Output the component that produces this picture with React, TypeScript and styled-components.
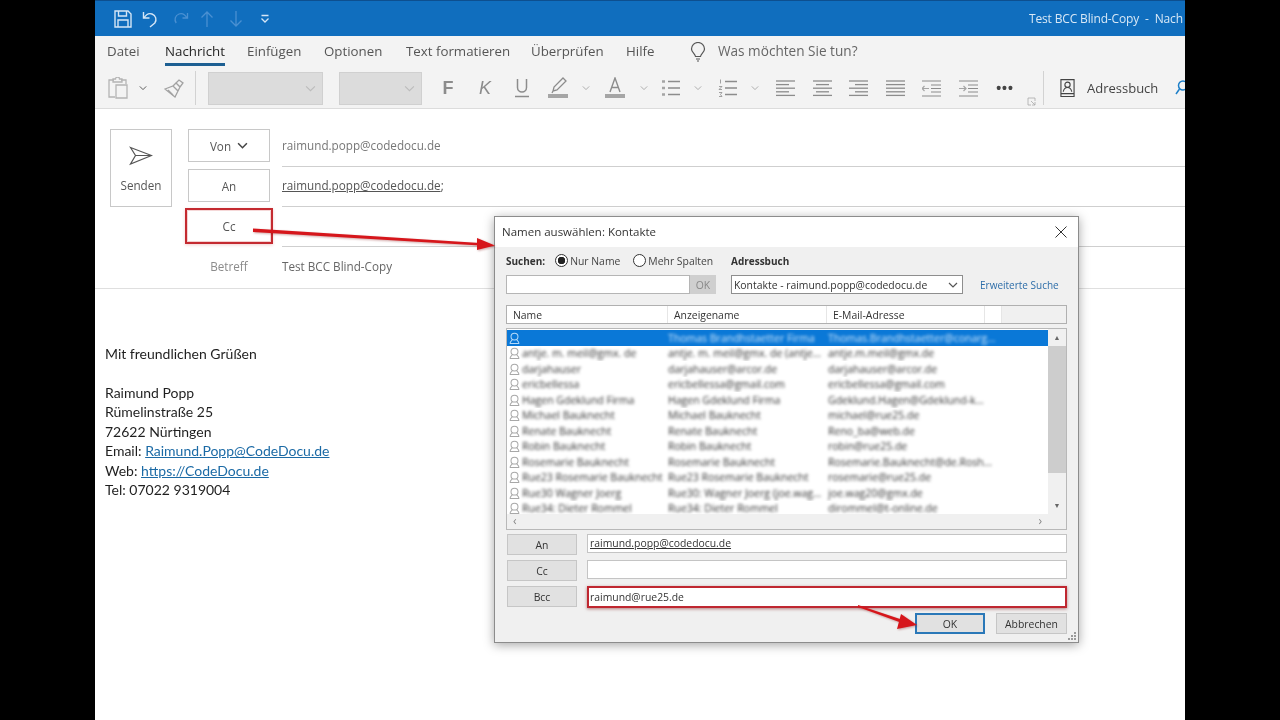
import React from 'react';
import styled, { createGlobalStyle } from 'styled-components';

const uiFont = `"Open Sans", "Noto Sans", sans-serif`;
const Grey = '#8c8c8c';

const GlobalStyle = createGlobalStyle`
  html, body {
    margin: 0;
    height: 100%;
    background: #000;
    overflow: hidden;
  }
  * {
    box-sizing: border-box;
  }
`;

const people = [
  ['Thomas Brandhstaetter Firma', 'Thomas.Brandhstaetter@conarg...'],
  ['antje. m. meil@gmx. de', 'antje. m. meil@gmx. de (antje...', 'antje.m.meil@gmx.de'],
  ['darjahauser', 'darjahauser@arcor.de', 'darjahauser@arcor.de'],
  ['ericbellessa', 'ericbellessa@gmail.com', 'ericbellessa@gmail.com'],
  ['Hagen Gdeklund Firma', 'Hagen Gdeklund Firma', 'Gdeklund.Hagen@Gdeklund-k...'],
  ['Michael Bauknecht', 'Michael Bauknecht', 'michael@rue25.de'],
  ['Renate Bauknecht', 'Renate Bauknecht', 'Reno_ba@web.de'],
  ['Robin Bauknecht', 'Robin Bauknecht', 'robin@rue25.de'],
  ['Rosemarie Bauknecht', 'Rosemarie Bauknecht', 'Rosemarie.Bauknecht@de.Rosh...'],
  ['Rue23 Rosemarie Bauknecht', 'Rue23 Rosemarie Bauknecht', 'rosemarie@rue25.de'],
  ['Rue30 Wagner Joerg', 'Rue30: Wagner Joerg (joe.wag...', 'joe.wag20@gmx.de'],
  ['Rue34: Dieter Rommel', 'Rue34: Dieter Rommel', 'dirommel@t-online.de'],
];

const tabs = [
  { label: 'Datei', width: 58 },
  { label: 'Nachricht', width: 82, active: true },
  { label: 'Einfügen', width: 77 },
  { label: 'Optionen', width: 82 },
  { label: 'Text formatieren', width: 125 },
  { label: 'Überprüfen', width: 95 },
  { label: 'Hilfe', width: 64 },
];

const SaveIcon = () => (
  <svg width="18" height="18" viewBox="0 0 18 18" fill="none" stroke="#d5e6f6" strokeWidth="1.4">
    <path d="M1 1h13l3 3v13H1z" />
    <path d="M4.5 1v5h8V1M4 17v-7h10v7" />
  </svg>
);

const UndoIcon = () => (
  <svg width="18" height="18" viewBox="0 0 18 18" fill="none" stroke="#d5e6f6" strokeWidth="1.4">
    <path d="M1.5 2v6h6M2 8c2-3.5 5-5 8-4 4 1.4 5 6 2.8 9L8 17" />
  </svg>
);

const RedoIcon = () => (
  <svg width="18" height="18" viewBox="0 0 18 18" fill="none" stroke="#4a90d2" strokeWidth="1.3">
    <path d="M16.5 3v5h-5M16 8c-2-3.5-5-5-8-4C4 5.4 3 10 5.2 13" />
  </svg>
);

const VerticalArrow = ({ down }: { down?: boolean }) => (
  <svg width="16" height="18" viewBox="0 0 16 18" fill="none" stroke="#4a90d2" strokeWidth="1.3">
    {down ? <path d="M8 1v15M2.5 10.5 8 16l5.5-5.5" /> : <path d="M8 17V2M2.5 7.5 8 2l5.5 5.5" />}
  </svg>
);

const QuickAccessMenu = () => (
  <svg width="10" height="10" viewBox="0 0 10 10" fill="none" stroke="#d5e6f6" strokeWidth="1.3">
    <path d="M1.5 1.5h7M1.5 4.5 5 8l3.5-3.5" />
  </svg>
);

const BulbIcon = () => (
  <svg width="16" height="20" viewBox="0 0 16 20" fill="none" stroke="#555" strokeWidth="1.2">
    <path d="M5.5 14.5C5 11.5 1.5 10.5 1.5 7a6.5 6.5 0 0 1 13 0c0 3.5-3.5 4.5-4 7.5zM6 17h4M7 19h2" />
  </svg>
);

const Chevron = ({ color = '#777', size = 8, weight = 1.2 }: { color?: string; size?: number; weight?: number }) => (
  <svg width={size} height={size} viewBox="0 0 10 10" fill="none" stroke={color} strokeWidth={weight}>
    <path d="M1 3l4 4 4-4" />
  </svg>
);

const PasteIcon = () => (
  <svg width="20" height="22" viewBox="0 0 20 22" fill="none" stroke="#b4b4b4" strokeWidth="1.3">
    <path d="M6 3H1v17h6M13 3h5v4M5 5V2h2.5a2 2 0 0 1 4 0H14v3z" />
    <path d="M8 8h11v13H8z" fill="#f3f3f3" />
  </svg>
);

const BrushIcon = () => (
  <svg width="20" height="19" viewBox="0 0 20 19" fill="none" stroke="#a2a2a2" strokeWidth="1.3">
    <path d="M1 10l8-3 5 5-3 6zM9 7l3-3 4 4-2 4M12 4l3-3 4 3-3 4" />
    <path d="M4 11l5 5" />
  </svg>
);

const UnderlinedLetter = () => (
  <svg width="16" height="20" viewBox="0 0 16 20" fill="none" stroke={Grey} strokeWidth="1.5">
    <path d="M3.5 1v8.5a4.5 4.5 0 0 0 9 0V1M1 18.5h14" />
  </svg>
);

const HighlightIcon = () => (
  <svg width="22" height="22" viewBox="0 0 22 22" fill="none" stroke={Grey} strokeWidth="1.3">
    <path d="M16 1l3 3L10 13l-4 1 1-4zM6 14l-1 2" />
    <rect x="1" y="17" width="20" height="4" fill="#a5a5a5" stroke="none" />
  </svg>
);

const FontColorIcon = () => (
  <svg width="22" height="22" viewBox="0 0 22 22" fill="none" stroke={Grey} strokeWidth="1.4">
    <path d="M6 15 11 1l5 14M7.5 10.5h7" />
    <rect x="1" y="17" width="20" height="4" fill="#a5a5a5" stroke="none" />
  </svg>
);

const BulletsIcon = () => (
  <svg width="20" height="18" viewBox="0 0 20 18" fill="none" stroke={Grey} strokeWidth="1.3">
    <path d="M7 2.5h12M7 9h12M7 15.5h12" />
    <path d="M1 2.5h3M1 9h3M1 15.5h3" strokeWidth="2.4" stroke="#a5a5a5" />
  </svg>
);

const NumberedIcon = () => (
  <svg width="20" height="18" viewBox="0 0 20 18" fill="none" stroke={Grey} strokeWidth="1.3">
    <path d="M7 2.5h12M7 9h12M7 15.5h12" />
    <path d="M2.5 0.5v4M1 7.5h3l-3 3h3M1 13.5h3l-1.5 2 1.5 2H1" strokeWidth="0.8" />
  </svg>
);

const alignRows: Record<string, number[][]> = {
  left: [[0, 19], [0, 13], [0, 19], [0, 13], [0, 19]],
  center: [[0, 19], [3, 16], [0, 19], [3, 16], [0, 19]],
  right: [[0, 19], [6, 19], [0, 19], [6, 19], [0, 19]],
  full: [[0, 19], [0, 19], [0, 19], [0, 19], [0, 19]],
};

const AlignIcon = ({ kind }: { kind: string }) => (
  <svg width="19" height="17" viewBox="0 0 19 17" stroke={Grey} strokeWidth="1.3">
    {alignRows[kind].map(([from, to], i) => (
      <line key={i} x1={from} x2={to} y1={1 + i * 3.6} y2={1 + i * 3.6} />
    ))}
  </svg>
);

const IndentIcon = ({ more }: { more?: boolean }) => (
  <svg width="19" height="17" viewBox="0 0 19 17" fill="none" stroke={Grey} strokeWidth="1.2">
    <path d="M0 1h19M9 5h10M9 8.5h10M9 12h10M0 16h19" />
    {more ? (
      <path d="M0 8.5h7M4.5 6 7 8.5 4.5 11" stroke="#a5a5a5" />
    ) : (
      <path d="M7 8.5H0M2.5 6 0 8.5 2.5 11" stroke="#a5a5a5" />
    )}
  </svg>
);

const LauncherIcon = () => (
  <svg width="9" height="9" viewBox="0 0 9 9" fill="none" stroke="#a8a8a8" strokeWidth="0.8">
    <path d="M8 4V1H1v7h3M4 4l4 4M8 5v3H5" />
  </svg>
);

const BookIcon = () => (
  <svg width="15" height="20" viewBox="0 0 16 20" fill="none" stroke="#444" strokeWidth="1.2">
    <path d="M1 1h14v18H1zM1 16h14" />
    <circle cx="8" cy="6.5" r="2.8" />
    <path d="M3.5 14c.5-3 2.5-4.5 4.5-4.5s4 1.5 4.5 4.5" />
  </svg>
);

const PersonSearchIcon = () => (
  <svg width="14" height="17" viewBox="0 0 14 17" fill="none" stroke="#1d7fc8" strokeWidth="1.5">
    <circle cx="8" cy="5.5" r="4.5" />
    <path d="M4.5 9 1 14" />
  </svg>
);

const SendIcon = () => (
  <svg width="24" height="20" viewBox="0 0 24 20" fill="none" stroke="#555" strokeWidth="1.2">
    <path d="M1.5 1.5 22.5 9.5 1.5 18 6.5 9.5zM6.5 9.5h16" />
  </svg>
);

const CloseIcon = () => (
  <svg width="12" height="12" viewBox="0 0 12 12" stroke="#333" strokeWidth="1">
    <path d="M.5.5l11 11M11.5.5l-11 11" />
  </svg>
);

const RowPerson = ({ light }: { light?: boolean }) => (
  <svg width="11" height="12" viewBox="0 0 12 13" fill="none" stroke={light ? '#d5ecff' : '#999'} strokeWidth="1.1">
    <circle cx="6" cy="5" r="3.8" />
    <path d="M1 12.5c.5-2.5 2-3.5 2.5-4M11 12.5c-.5-2.5-2-3.5-2.5-4M1 12.5h10" />
  </svg>
);

const Screen = styled.div`
  width: 1280px;
  height: 720px;
  padding-left: 95px;
  background: #000;
`;

const OutlookWindow = styled.div`
  position: relative;
  width: 1090px;
  height: 720px;
  background: #fff;
  overflow: hidden;
  font-family: ${uiFont};
  color: #444;
  filter: blur(0.35px);
`;

const TitleBar = styled.header`
  height: 36px;
  background: #106ebe;
  border-top: 1px solid #0d4f8f;
  display: flex;
  align-items: center;
  justify-content: space-between;
`;

const QuickAccess = styled.div`
  display: flex;
  align-items: center;
  padding-left: 14px;
`;

const WindowTitle = styled.div`
  width: 156px;
  white-space: pre;
  font-size: 12px;
  letter-spacing: -0.15px;
  color: #d8e8f6;
`;

const TabBar = styled.nav`
  height: 32px;
  background: #f3f3f3;
  display: flex;
  align-items: center;
  padding-left: 12px;
`;

const Tab = styled.div<{ $width: number }>`
  width: ${(p) => p.$width}px;
  flex: none;
`;

const TabLabel = styled.span<{ $active?: boolean }>`
  display: inline-block;
  font-size: 13.3px;
  line-height: 26px;
  height: 28px;
  color: ${(p) => (p.$active ? '#262626' : '#555')};
  font-weight: ${(p) => (p.$active ? 500 : 400)};
  border-bottom: ${(p) => (p.$active ? '3px solid #1d5f92' : '3px solid transparent')};
`;

const BulbSlot = styled.div`
  width: 28px;
  display: flex;
`;

const TellMe = styled.span`
  font-size: 13.6px;
  line-height: 26px;
  margin-bottom: 2px;
  color: #666;
`;

const Ribbon = styled.div`
  height: 41px;
  background: #f3f3f3;
  border-bottom: 1px solid #dcdcdc;
  display: flex;
  align-items: center;
  padding-left: 8px;
`;

const ToolSlot = styled.div<{ $w: number }>`
  width: ${(p) => p.$w}px;
  flex: none;
  display: flex;
  align-items: center;
  justify-content: center;
`;

const RibbonDivider = styled.div`
  width: 1px;
  height: 34px;
  background: #d2d2d2;
  flex: none;
`;

const FontSelect = styled.div<{ $width: number; $left: number }>`
  width: ${(p) => p.$width}px;
  margin-left: ${(p) => p.$left}px;
  height: 33px;
  background: #dcdcdc;
  border: 1px solid #d0d0d0;
  display: flex;
  align-items: center;
  justify-content: flex-end;
  padding-right: 6px;
  flex: none;
`;

const ToolGap = styled.div`
  width: 8px;
  flex: none;
`;

const GlyphF = styled.span`
  font: 700 18px "Liberation Sans", sans-serif;
  color: ${Grey};
`;

const GlyphK = styled.span`
  font: italic 400 18px "Liberation Sans", sans-serif;
  color: ${Grey};
`;

const Dots = styled.span`
  font: 700 14px "Liberation Sans", sans-serif;
  letter-spacing: 1px;
  color: #444;
`;

const LauncherSlot = styled.div`
  width: 17px;
  flex: none;
  align-self: flex-end;
  padding-bottom: 2px;
  padding-left: 1px;
  display: flex;
`;

const AddressBook = styled.div`
  display: flex;
  align-items: center;
  gap: 12px;
  margin-left: 16px;
  font-size: 13px;
  color: #444;
  white-space: nowrap;
  flex: none;
`;

const PersonSearchSlot = styled.div`
  margin-left: 17px;
  display: flex;
  flex: none;
`;

const Compose = styled.section`
  display: flex;
  padding-top: 20px;
`;

const SendColumn = styled.div`
  width: 93px;
  flex: none;
  padding-left: 15px;
`;

const SendButton = styled.div`
  width: 62px;
  height: 78px;
  border: 1px solid #c8c8c8;
  display: flex;
  flex-direction: column;
  align-items: center;
  gap: 11px;
  padding-top: 16px;
  font-size: 11.7px;
  color: #555;
`;

const Fields = styled.div`
  flex: 1;
`;

const FieldRow = styled.div`
  display: grid;
  grid-template-columns: 82px 1fr;
  column-gap: 12px;
  height: 40px;
  align-items: start;
`;

const FieldButton = styled.div<{ $marked?: boolean }>`
  height: 33px;
  border: ${(p) => (p.$marked ? 'none' : '1px solid #c8c8c8')};
  display: flex;
  align-items: center;
  justify-content: center;
  font-size: 11.7px;
  color: #555;
  ${(p) =>
    p.$marked &&
    `
    height: 30px;
    margin-top: 2px;
    outline: 2px solid #c42a30;
    outline-offset: 1px;
    box-shadow: 0 1px 3px 3px rgba(200, 40, 40, 0.22);
  `}

  & svg {
    margin-left: 3px;
  }
`;

const FieldValue = styled.div<{ $dark?: boolean }>`
  height: 38px;
  border-bottom: 1px solid #cfcfcf;
  font-size: 11.7px;
  line-height: 33px;
  color: ${(p) => (p.$dark ? '#555' : '#777')};
`;

const SubjectRow = styled.div`
  display: grid;
  grid-template-columns: 82px 1fr;
  column-gap: 12px;
  height: 39px;
  align-items: start;
  line-height: 35px;
`;

const SubjectLabel = styled.span`
  font-size: 11.7px;
  color: #8b8b8b;
  text-align: center;
`;

const SubjectValue = styled.span`
  font-size: 11.7px;
  color: #666;
`;

const Signature = styled.div`
  border-top: 1px solid #dfdfdf;
  padding: 55px 0 0 10px;
  font-family: Lato, "Liberation Sans", sans-serif;
  font-size: 14px;
  color: #1f1f1f;

  & p {
    margin: 0;
    line-height: 19.45px;
  }
`;

const SigLink = styled.span`
  color: #1b6aa5;
  text-decoration: underline;
`;

const Dialog = styled.div`
  position: absolute;
  left: 399px;
  top: 216px;
  width: 585px;
  height: 427px;
  background: #f0f0f0;
  border: 1px solid #8c8c8c;
  box-shadow: 0 2px 10px rgba(0, 0, 0, 0.35);
  display: flex;
  flex-direction: column;
  font-size: 10.4px;
  color: #333;
`;

const DialogHeader = styled.div`
  height: 30px;
  flex: none;
  background: #fff;
  display: flex;
  align-items: center;
  justify-content: space-between;
  padding: 0 11px 1px 7px;
  font-size: 11.5px;
  color: #333;
`;

const DialogBody = styled.div`
  flex: 1;
  padding: 3px 11px 0 11px;
  display: flex;
  flex-direction: column;
`;

const SearchGrid = styled.div`
  display: grid;
  grid-template-columns: 210px 232px 1fr;
  column-gap: 15px;
  row-gap: 4px;
  grid-template-rows: 21px 19px;
  align-items: center;
`;

const SearchOptions = styled.div`
  display: flex;
  align-items: center;
  white-space: nowrap;

  & b {
    font-weight: 700;
    font-size: 10px;
    margin-right: 10px;
  }
`;

const Radio = styled.span<{ $checked?: boolean }>`
  width: 13px;
  height: 13px;
  flex: none;
  border: 1px solid #333;
  border-radius: 50%;
  background: ${(p) => (p.$checked ? 'radial-gradient(circle, #222 0 3.5px, #fff 4px)' : '#fff')};
`;

const RadioLabel = styled.span`
  margin: 0 13px 0 2px;
  color: #444;
`;

const BookLabel = styled.b`
  font-weight: 700;
  font-size: 10px;
  grid-column: 2 / 4;
`;

const SearchField = styled.div`
  display: flex;
  height: 19px;
  width: 210px;
  grid-column: 1;
  grid-row: 2;
`;

const SearchInput = styled.div`
  width: 184px;
  background: #fff;
  border: 1px solid #b5b5b5;
`;

const SearchOk = styled.div`
  flex: 1;
  background: #cfcfcf;
  color: #888;
  display: flex;
  align-items: center;
  justify-content: center;
`;

const BookSelect = styled.div`
  height: 19px;
  width: 232px;
  background: #fff;
  border: 1px solid #8e8e8e;
  display: flex;
  align-items: center;
  justify-content: space-between;
  padding: 0 4px 0 2px;
  white-space: nowrap;
  grid-column: 2;
  grid-row: 2;
`;

const AdvancedLink = styled.span`
  color: #2d6da8;
  font-size: 10px;
  white-space: nowrap;
  grid-column: 3;
  grid-row: 2;
  margin-left: 2px;
`;

const ColumnHeader = styled.div`
  margin-top: 11px;
  height: 19px;
  width: 561px;
  display: flex;
  background: #fff;
  border: 1px solid #b0b0b0;
  flex: none;
`;

const HeaderCell = styled.div<{ $w: number }>`
  width: ${(p) => p.$w}px;
  flex: none;
  padding-left: 6px;
  line-height: 18px;
  border-right: 1px solid #e6e6e6;
`;

const HeaderFill = styled.div`
  flex: 1;
  background: #f0f0f0;
`;

const ContactList = styled.div`
  margin-top: 4px;
  width: 561px;
  height: 202px;
  flex: none;
  background: #fff;
  border: 1px solid #b8b8b8;
  display: flex;
  flex-direction: column;
`;

const ContactRows = styled.div`
  flex: 1;
  display: flex;
  min-height: 0;
`;

const RowStack = styled.div`
  flex: 1;
  padding-top: 1px;
  overflow: hidden;
`;

const ContactRow = styled.div<{ $selected?: boolean }>`
  height: 15.5px;
  display: flex;
  align-items: center;
  width: 541px;
  background: ${(p) => (p.$selected ? '#0a78d7' : 'transparent')};
  padding-left: 2px;
  overflow: hidden;
`;

const RowIconCell = styled.div`
  width: 13px;
  flex: none;
  display: flex;
  opacity: 0.85;
`;

const BlurText = styled.span<{ $w: number; $selected?: boolean }>`
  width: ${(p) => p.$w}px;
  flex: none;
  white-space: nowrap;
  overflow: hidden;
  padding-right: 2px;
  font-size: 10.5px;
  color: ${(p) => (p.$selected ? '#cfe6fb' : '#333')};
  filter: blur(1.6px);
`;

const VScroll = styled.div`
  width: 18px;
  flex: none;
  background: #f0f0f0;
  display: flex;
  flex-direction: column;
`;

const ScrollArrow = styled.div`
  height: 17px;
  font-size: 7px;
  line-height: 17px;
  text-align: center;
  color: #666;
  flex: none;
  &:last-child {
    margin-top: auto;
  }
`;

const ScrollThumb = styled.div`
  height: 127px;
  background: #cdcdcd;
`;

const HScroll = styled.div`
  height: 15px;
  flex: none;
  background: #f0f0f0;
  display: flex;
  justify-content: space-between;
  padding: 0 24px 0 6px;
  font-size: 12px;
  line-height: 13px;
  color: #888;
`;

const Recipients = styled.div`
  margin-top: 4px;
  display: grid;
  grid-template-columns: 70px 1fr;
  column-gap: 10px;
  grid-auto-rows: 21px;
  row-gap: 5px;
  width: 561px;
  padding-left: 1px;
`;

const RecipientButton = styled.div`
  background: #e1e1e1;
  border: 1px solid #c6c6c6;
  display: flex;
  align-items: center;
  justify-content: center;
`;

const RecipientInput = styled.div<{ $marked?: boolean }>`
  height: 19px;
  background: #fff;
  border: 1px solid #c4c4c4;
  padding-left: 2px;
  line-height: 17px;
  color: #333;
  ${(p) =>
    p.$marked &&
    `
    height: 22px;
    line-height: 18px;
    padding-left: 1px;
    border: 2px solid #bf2730;
    box-shadow: 0 1px 3px rgba(130, 30, 30, 0.55);
  `}
`;

const DialogActions = styled.div`
  margin-top: 6px;
  display: flex;
  justify-content: flex-end;
  gap: 11px;
  width: 561px;
`;

const DialogButton = styled.div<{ $primary?: boolean }>`
  width: ${(p) => (p.$primary ? 70 : 71)}px;
  height: 21px;
  background: #e1e1e1;
  border: ${(p) => (p.$primary ? '2px solid #2a78b8' : '1px solid #c6c6c6')};
  display: flex;
  align-items: center;
  justify-content: center;
`;

const Grip = styled.div`
  position: absolute;
  right: 1px;
  bottom: 1px;
  display: flex;
`;

const Annotations = styled.svg`
  position: absolute;
  left: 0;
  top: 0;
  pointer-events: none;
  filter: drop-shadow(1px 1px 1px rgba(120, 0, 0, 0.35));
`;

const ribbonTools: { w: number; icon: React.ReactNode }[] = [
  { w: 36, icon: <GlyphF>F</GlyphF> },
  { w: 38, icon: <GlyphK>K</GlyphK> },
  { w: 36, icon: <UnderlinedLetter /> },
  { w: 36, icon: <HighlightIcon /> },
  { w: 20, icon: <Chevron color="#aaa" /> },
  { w: 38, icon: <FontColorIcon /> },
  { w: 20, icon: <Chevron color="#aaa" /> },
  { w: 34, icon: <BulletsIcon /> },
  { w: 20, icon: <Chevron color="#aaa" /> },
  { w: 40, icon: <NumberedIcon /> },
  { w: 14, icon: <Chevron color="#aaa" /> },
  { w: 46, icon: <AlignIcon kind="left" /> },
  { w: 28, icon: <AlignIcon kind="center" /> },
  { w: 44, icon: <AlignIcon kind="right" /> },
  { w: 30, icon: <AlignIcon kind="full" /> },
  { w: 42, icon: <IndentIcon /> },
  { w: 32, icon: <IndentIcon more /> },
  { w: 42, icon: <Dots>•••</Dots> },
];

export default function App() {
  return (
    <Screen>
      <GlobalStyle />
      <OutlookWindow>
        <TitleBar>
          <QuickAccess>
            <ToolSlot $w={28}>
              <SaveIcon />
            </ToolSlot>
            <ToolSlot $w={28}>
              <UndoIcon />
            </ToolSlot>
            <ToolSlot $w={30}>
              <RedoIcon />
            </ToolSlot>
            <ToolSlot $w={24}>
              <VerticalArrow />
            </ToolSlot>
            <ToolSlot $w={34}>
              <VerticalArrow down />
            </ToolSlot>
            <ToolSlot $w={24}>
              <QuickAccessMenu />
            </ToolSlot>
          </QuickAccess>
          <WindowTitle>{'Test BCC Blind-Copy  -  Nach'}</WindowTitle>
        </TitleBar>

        <TabBar>
          {tabs.map((tab) => (
            <Tab key={tab.label} $width={tab.width}>
              <TabLabel $active={tab.active}>{tab.label}</TabLabel>
            </Tab>
          ))}
          <BulbSlot>
            <BulbIcon />
          </BulbSlot>
          <TellMe>Was möchten Sie tun?</TellMe>
        </TabBar>

        <Ribbon>
          <ToolSlot $w={30}>
            <PasteIcon />
          </ToolSlot>
          <ToolSlot $w={20}>
            <Chevron color="#555" />
          </ToolSlot>
          <ToolSlot $w={42}>
            <BrushIcon />
          </ToolSlot>
          <RibbonDivider />
          <FontSelect $width={115} $left={12}>
            <Chevron color="#bcbcbc" size={11} weight={1} />
          </FontSelect>
          <FontSelect $width={83} $left={16}>
            <Chevron color="#bcbcbc" size={11} weight={1} />
          </FontSelect>
          <ToolGap />
          {ribbonTools.map((tool, i) => (
            <ToolSlot key={i} $w={tool.w}>
              {tool.icon}
            </ToolSlot>
          ))}
          <LauncherSlot>
            <LauncherIcon />
          </LauncherSlot>
          <RibbonDivider />
          <AddressBook>
            <BookIcon />
            <span>Adressbuch</span>
          </AddressBook>
          <PersonSearchSlot>
            <PersonSearchIcon />
          </PersonSearchSlot>
        </Ribbon>

        <Compose>
          <SendColumn>
            <SendButton>
              <SendIcon />
              <span>Senden</span>
            </SendButton>
          </SendColumn>
          <Fields>
            <FieldRow>
              <FieldButton>
                Von&nbsp;
                <Chevron color="#444" size={11} weight={1.4} />
              </FieldButton>
              <FieldValue>raimund.popp@codedocu.de</FieldValue>
            </FieldRow>
            <FieldRow>
              <FieldButton>An</FieldButton>
              <FieldValue $dark>
                <u>raimund.popp@codedocu.de</u>;
              </FieldValue>
            </FieldRow>
            <FieldRow>
              <FieldButton $marked>Cc</FieldButton>
              <FieldValue />
            </FieldRow>
            <SubjectRow>
              <SubjectLabel>Betreff</SubjectLabel>
              <SubjectValue>Test BCC Blind-Copy</SubjectValue>
            </SubjectRow>
          </Fields>
        </Compose>

        <Signature>
          <p>Mit freundlichen Grüßen</p>
          <p>&nbsp;</p>
          <p>Raimund Popp</p>
          <p>Rümelinstraße 25</p>
          <p>72622 Nürtingen</p>
          <p>
            Email: <SigLink>Raimund.Popp@CodeDocu.de</SigLink>
          </p>
          <p>
            Web: <SigLink>https://CodeDocu.de</SigLink>
          </p>
          <p>Tel: 07022 9319004</p>
        </Signature>

        <Dialog>
          <DialogHeader>
            <span>Namen auswählen: Kontakte</span>
            <CloseIcon />
          </DialogHeader>
          <DialogBody>
            <SearchGrid>
              <SearchOptions>
                <b>Suchen:</b>
                <Radio $checked />
                <RadioLabel>Nur Name</RadioLabel>
                <Radio />
                <RadioLabel>Mehr Spalten</RadioLabel>
              </SearchOptions>
              <BookLabel>Adressbuch</BookLabel>
              <SearchField>
                <SearchInput />
                <SearchOk>OK</SearchOk>
              </SearchField>
              <BookSelect>
                <span>Kontakte - raimund.popp@codedocu.de</span>
                <Chevron color="#555" size={10} />
              </BookSelect>
              <AdvancedLink>Erweiterte Suche</AdvancedLink>
            </SearchGrid>

            <ColumnHeader>
              <HeaderCell $w={161}>Name</HeaderCell>
              <HeaderCell $w={159}>Anzeigename</HeaderCell>
              <HeaderCell $w={158}>E-Mail-Adresse</HeaderCell>
              <HeaderCell $w={17} />
              <HeaderFill />
            </ColumnHeader>

            <ContactList>
              <ContactRows>
                <RowStack>
                  {people.map((p, i) => (
                    <ContactRow key={p[0]} $selected={i === 0}>
                      <RowIconCell>
                        <RowPerson light={i === 0} />
                      </RowIconCell>
                      <BlurText $selected={i === 0} $w={146}>
                        {i === 0 ? '' : p[0]}
                      </BlurText>
                      <BlurText $selected={i === 0} $w={160}>
                        {i === 0 ? p[0] : p[1]}
                      </BlurText>
                      <BlurText $selected={i === 0} $w={170}>
                        {i === 0 ? p[1] : p[2]}
                      </BlurText>
                    </ContactRow>
                  ))}
                </RowStack>
                <VScroll>
                  <ScrollArrow>▲</ScrollArrow>
                  <ScrollThumb />
                  <ScrollArrow>▼</ScrollArrow>
                </VScroll>
              </ContactRows>
              <HScroll>
                <span>‹</span>
                <span>›</span>
              </HScroll>
            </ContactList>

            <Recipients>
              <RecipientButton>An</RecipientButton>
              <RecipientInput>
                <u>raimund.popp@codedocu.de</u>
              </RecipientInput>
              <RecipientButton>Cc</RecipientButton>
              <RecipientInput />
              <RecipientButton>Bcc</RecipientButton>
              <RecipientInput $marked>raimund@rue25.de</RecipientInput>
            </Recipients>

            <DialogActions>
              <DialogButton $primary>OK</DialogButton>
              <DialogButton>Abbrechen</DialogButton>
            </DialogActions>
          </DialogBody>
          <Grip>
            <svg width="10" height="10" viewBox="0 0 10 10" fill="#9a9a9a">
              <rect x="7" y="1" width="2" height="2" />
              <rect x="4" y="4" width="2" height="2" />
              <rect x="7" y="4" width="2" height="2" />
              <rect x="1" y="7" width="2" height="2" />
              <rect x="4" y="7" width="2" height="2" />
              <rect x="7" y="7" width="2" height="2" />
            </svg>
          </Grip>
        </Dialog>

        <Annotations viewBox="0 0 1090 720" width="1090" height="720">
          <g fill="#d6161b" stroke="none">
            <path d="M158 228.5 385 243l0 2.5L158 232z" />
            <path d="M382 238 400 245.5 382 250z" />
            <path d="M763 605 808 620l-1 3-44-16z" />
            <path d="M806 614 822 625 802 629z" />
          </g>
        </Annotations>
      </OutlookWindow>
    </Screen>
  );
}
